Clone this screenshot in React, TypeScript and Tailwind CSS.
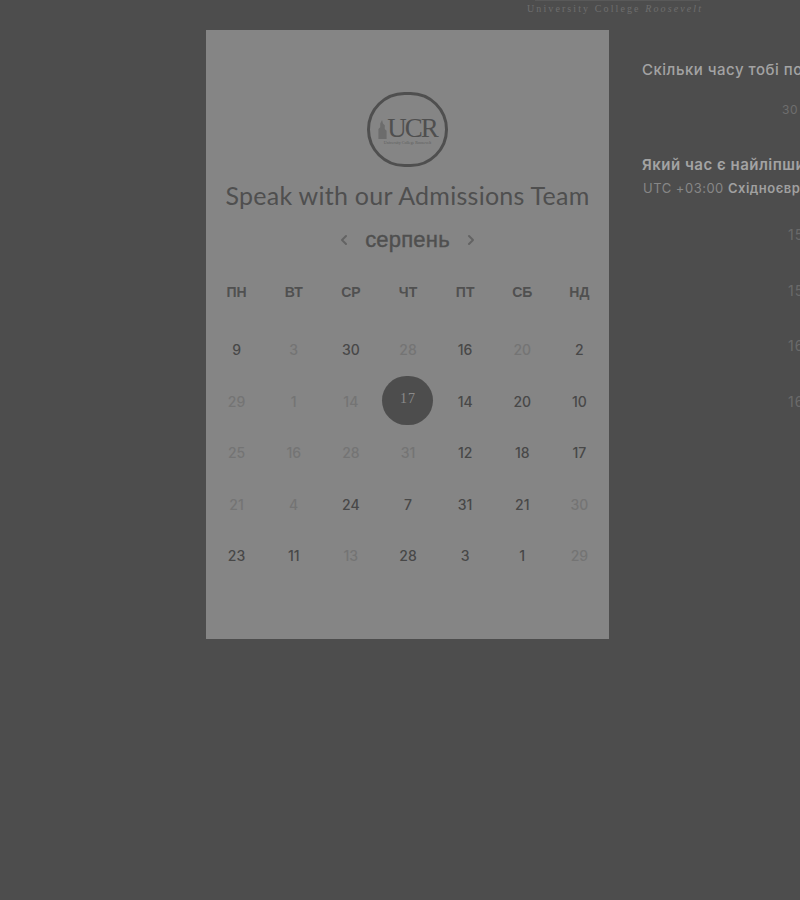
import React from "react";
import { ChevronLeft, ChevronRight } from "lucide-react";

type Day = { label: string; active?: boolean; selected?: boolean };

const rows: Day[][] = [
  [{ label: "9", active: true }, { label: "3" }, { label: "30", active: true }, { label: "28" }, { label: "16", active: true }, { label: "20" }, { label: "2", active: true }],
  [{ label: "29" }, { label: "1" }, { label: "14" }, { label: "17", selected: true }, { label: "14", active: true }, { label: "20", active: true }, { label: "10", active: true }],
  [{ label: "25" }, { label: "16" }, { label: "28" }, { label: "31" }, { label: "12", active: true }, { label: "18", active: true }, { label: "17", active: true }],
  [{ label: "21" }, { label: "4" }, { label: "24", active: true }, { label: "7", active: true }, { label: "31", active: true }, { label: "21", active: true }, { label: "30" }],
  [{ label: "23", active: true }, { label: "11", active: true }, { label: "13" }, { label: "28", active: true }, { label: "3", active: true }, { label: "1", active: true }, { label: "29" }],
];

const weekdays = ["ПН", "ВТ", "СР", "ЧТ", "ПТ", "СБ", "НД"];
const times = ["15:00", "15:30", "16:00", "16:30"];

const Logo = () => (
  <div className="w-[81px] h-[75px] rounded-full border-[3px] border-[#4f4f4f] flex flex-col items-center justify-center pt-[3px]">
    <div className="flex items-end leading-none h-[23px]">
      <svg width="9" height="20" viewBox="0 0 9 22" className="mb-[1px]" aria-hidden="true">
        <path d="M0 22V11l2-2V5l2-4 1 4 2 2v4l2 2v9z" fill="#6c6c6c" />
      </svg>
      <span className="font-['Liberation_Serif',serif] text-[27px] leading-[23px] tracking-[-2px] text-[#4f4f4f]">UCR</span>
    </div>
    <span className="font-['Liberation_Serif',serif] text-[4px] leading-[5px] text-[#5d5d5d] whitespace-nowrap">University College Roosevelt</span>
  </div>
);

export default function App() {
  return (
    <div className="w-[800px] h-[900px] bg-[#4d4d4d] overflow-hidden font-['Inter',sans-serif]">
      {/* Header strip */}
      <div className="h-[30px] pl-[527px] flex flex-col items-start">
        <div className="ml-[8px] w-[165px] h-px bg-[#595959]" />
        <span className="font-['Liberation_Serif',serif] text-[10px] leading-[16px] tracking-[2.1px] text-[#6d6d6d] whitespace-nowrap">
          University College <span className="italic">Roosevelt</span>
        </span>
      </div>

      <div className="flex pl-[206px]">
        {/* Calendar card */}
        <div className="w-[403px] h-[609px] shrink-0 bg-[#858585] flex flex-col items-center pt-[62px]">
          <Logo />
          <h1 className="mt-[10px] font-['Lato',sans-serif] text-[25px] leading-[36px] tracking-[0.27px] text-[#4f4f4f] whitespace-nowrap">
            Speak with our Admissions Team
          </h1>
          <div className="mt-[12px] flex items-center justify-center h-[30px]">
            <ChevronLeft className="w-[16px] h-[16px] text-[#636363]" strokeWidth={3} aria-hidden="true" />
            <span className="mx-[13px] font-['Liberation_Sans',sans-serif] text-[22px] leading-[30px] tracking-[0.2px] text-[#4f4f4f] [-webkit-text-stroke:0.4px_#4f4f4f]">серпень</span>
            <ChevronRight className="w-[16px] h-[16px] text-[#636363]" strokeWidth={3} aria-hidden="true" />
          </div>

          <div className="mt-[25px] ml-[1px] w-[400px] grid grid-cols-7 h-[24px] items-center">
            {weekdays.map((d) => (
              <span key={d} className="text-center font-['Liberation_Sans',sans-serif] font-bold text-[14px] leading-[24px] text-[#505050]">{d}</span>
            ))}
          </div>

          <div className="mt-[20px] ml-[1px] w-[400px] grid grid-cols-7 auto-rows-[51.5px] items-center justify-items-center">
            {rows.flat().map((day, i) =>
              day.selected ? (
                <div key={i} className="w-[51px] h-[49px] mb-[2px] rounded-full bg-[#4d4d4d] flex items-center justify-center font-['Liberation_Serif',serif] text-[14px] tracking-[1px] text-[#8a8a8a] pb-[3px]">
                  {day.label}
                </div>
              ) : (
                <span key={i} className={day.active ? "text-[14px] font-medium text-[#484848]" : "text-[14px] font-medium text-[#747474]"}>
                  {day.label}
                </span>
              )
            )}
          </div>
        </div>

        {/* Time column, cut by the window edge */}
        <div className="ml-[33px] w-[400px] shrink-0">
          <h2 className="mt-[30px] text-[15px] leading-[20px] font-medium tracking-[0.5px] text-[#a3a3a3] whitespace-nowrap">Скільки часу тобі потрібно?</h2>
          <p className="mt-[20px] pl-[140px] text-[12px] leading-[20px] tracking-[0.5px] text-[#6e6e6e]">30 хв</p>
          <h2 className="mt-[35px] text-[15px] leading-[20px] font-semibold tracking-[0.5px] text-[#a3a3a3] whitespace-nowrap">Який час є найліпшим для тебе?</h2>
          <p className="mt-[3px] pl-[1px] text-[13px] leading-[20px] tracking-[0.5px] text-[#878787] whitespace-nowrap">
            UTC +03:00 <span className="font-semibold text-[#a0a0a0]">Східноєвропейський літній час</span>
          </p>
          <ul className="mt-[27px] pl-[146px] flex flex-col gap-[35.5px]">
            {times.map((t) => (
              <li key={t} className="text-[14px] leading-[20px] tracking-[1px] text-[#6a6a6a]">{t}</li>
            ))}
          </ul>
        </div>
      </div>
    </div>
  );
}
